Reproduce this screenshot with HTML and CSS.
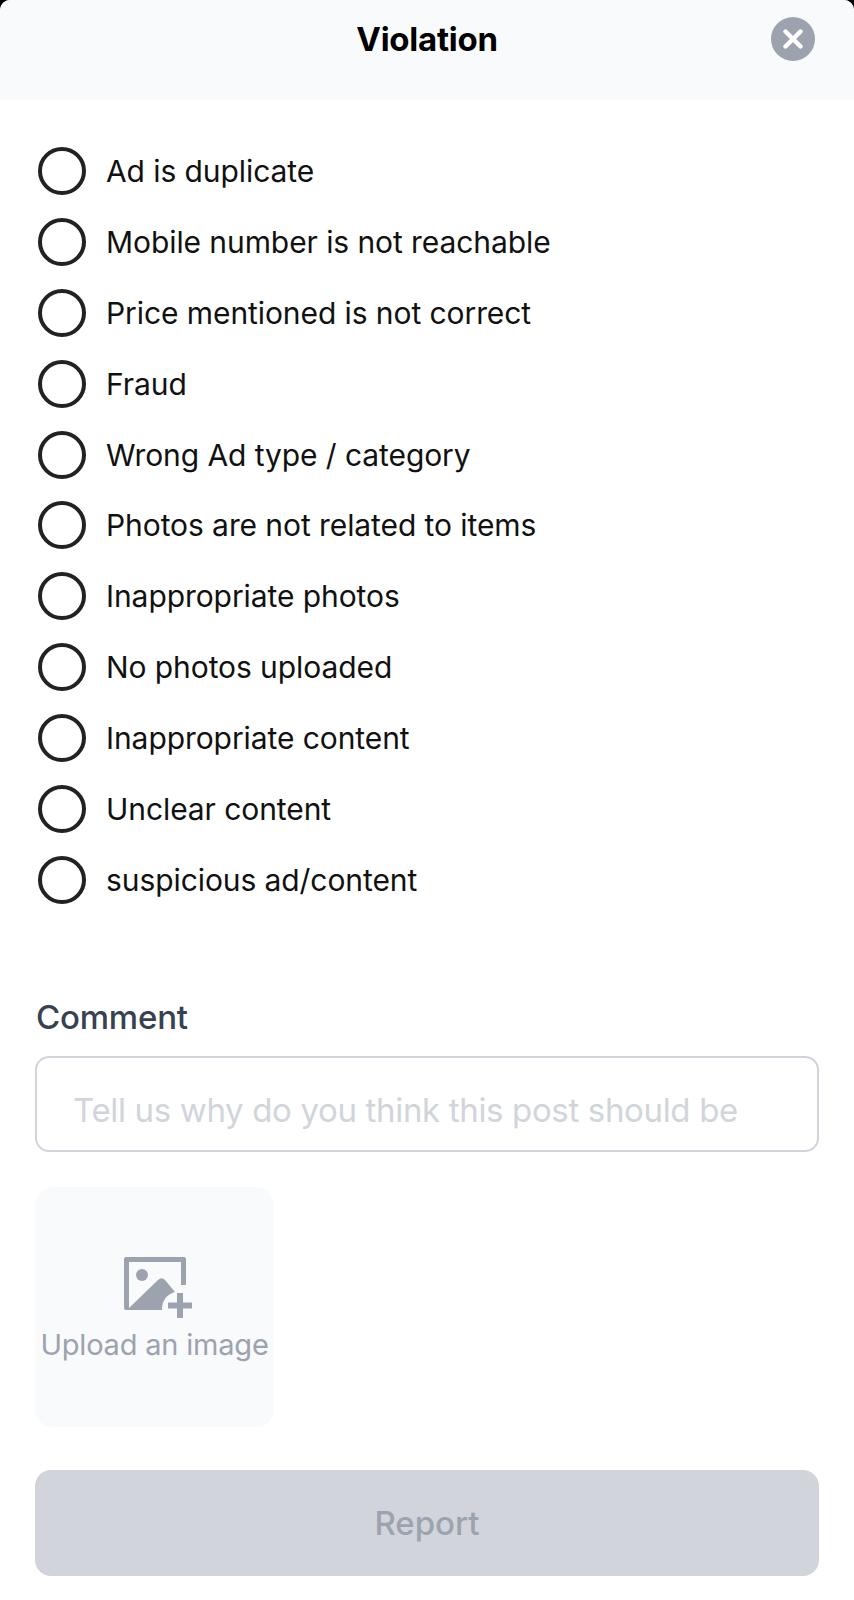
FILE: index.html
```html
<!DOCTYPE html>
<html lang="en">
<head>
<meta charset="utf-8">
<title>Violation</title>
<link rel="stylesheet" href="styles.css">
</head>
<body>
<div class="sheet">
  <header class="head">
    <h1 class="title">Violation</h1>
    <button class="close" aria-label="Close">
      <svg viewBox="0 0 20 20" width="20" height="20"><path d="M2.5 2.5L17.5 17.5M17.5 2.5L2.5 17.5" stroke="#fff" stroke-width="4.4" stroke-linecap="round" fill="none"/></svg>
    </button>
  </header>
  <main class="content">
    <ul class="reasons">
      <li class="reason"><span class="radio"></span>Ad is duplicate</li>
      <li class="reason"><span class="radio"></span>Mobile number is not reachable</li>
      <li class="reason"><span class="radio"></span>Price mentioned is not correct</li>
      <li class="reason"><span class="radio"></span>Fraud</li>
      <li class="reason"><span class="radio"></span>Wrong Ad type / category</li>
      <li class="reason"><span class="radio"></span>Photos are not related to items</li>
      <li class="reason"><span class="radio"></span>Inappropriate photos</li>
      <li class="reason"><span class="radio"></span>No photos uploaded</li>
      <li class="reason"><span class="radio"></span>Inappropriate content</li>
      <li class="reason"><span class="radio"></span>Unclear content</li>
      <li class="reason"><span class="radio"></span>suspicious ad/content</li>
    </ul>
    <label class="label">Comment</label>
    <div class="input">Tell us why do you think this post should be</div>
    <div class="upload">
      <svg class="upload-icon" viewBox="0 0 68 62" width="68" height="62">
        <path fill="#9ca3af" d="M2 0H60a2 2 0 0 1 2 2V28H57V5H5V51L34 23Q37.500 19.500 41 23L51 35A17 17 0 0 0 38 53H2a2 2 0 0 1-2-2V2a2 2 0 0 1 2-2Z"/>
        <circle cx="18" cy="18" r="6" fill="#9ca3af"/>
        <path fill="#9ca3af" d="M53 36H59V45.500H68V51.500H59V61H53V51.500H44V45.500H53Z"/>
      </svg>
      <span class="upload-text">Upload an image</span>
    </div>
    <button class="report">Report</button>
  </main>
</div>
</body>
</html>
```
FILE: styles.css
```css
* { box-sizing: border-box; }
html, body { margin: 0; padding: 0; background: #000; }
body { width: 854px; height: 1600px; font-family: Inter, "Liberation Sans", sans-serif; }
.sheet { width: 854px; height: 1600px; background: #fff; border-radius: 10px 10px 0 0; overflow: hidden; }
.head { height: 100px; background: #f9fafb; display: flex; justify-content: center; padding-top: 17px; position: relative; }
.title { margin: 0; font-size: 33px; line-height: 44px; font-weight: 700; color: #000; letter-spacing: -0.25px; }
.close { position: absolute; left: 771px; top: 17px; width: 44px; height: 44px; padding: 0; border: 0; border-radius: 50%; background: #9ca3af; display: flex; align-items: center; justify-content: center; }
.content { padding: 0 35px; }
.reasons { list-style: none; margin: 0; padding: 47px 0 0 3px; display: flex; flex-direction: column; gap: 22.9px; }
.reason { height: 48px; display: flex; align-items: center; gap: 20px; font-size: 30px; color: #111; letter-spacing: -0.08px; }
.radio { width: 48px; height: 48px; flex: none; border: 4px solid #222; border-radius: 50%; }
.label { display: block; margin-top: 91px; padding-left: 1px; font-size: 33px; line-height: 44px; font-weight: 450; color: #374151; letter-spacing: -0.2px; }
.input { margin-top: 17px; height: 96px; border: 2px solid #d1d5db; border-radius: 14px; padding: 12px 0 0 36px; display: flex; align-items: center; font-size: 33px; letter-spacing: -0.34px; color: #d1d5db; white-space: nowrap; overflow: hidden; }
.upload { margin-top: 35px; width: 239px; height: 240px; border-radius: 18px; background: #f9fafb; display: flex; flex-direction: column; align-items: center; padding-top: 70px; }
.upload-icon { margin-left: 6px; flex: none; }
.upload-text { margin-top: 8px; font-size: 29px; line-height: 36px; color: #9ca3af; white-space: nowrap; letter-spacing: -0.2px; }
.report { display: block; margin-top: 43px; width: 100%; height: 106px; border: 0; border-radius: 16px; background: #d1d5db; font-family: inherit; font-size: 33px; font-weight: 450; color: #9ca3af; }
```
